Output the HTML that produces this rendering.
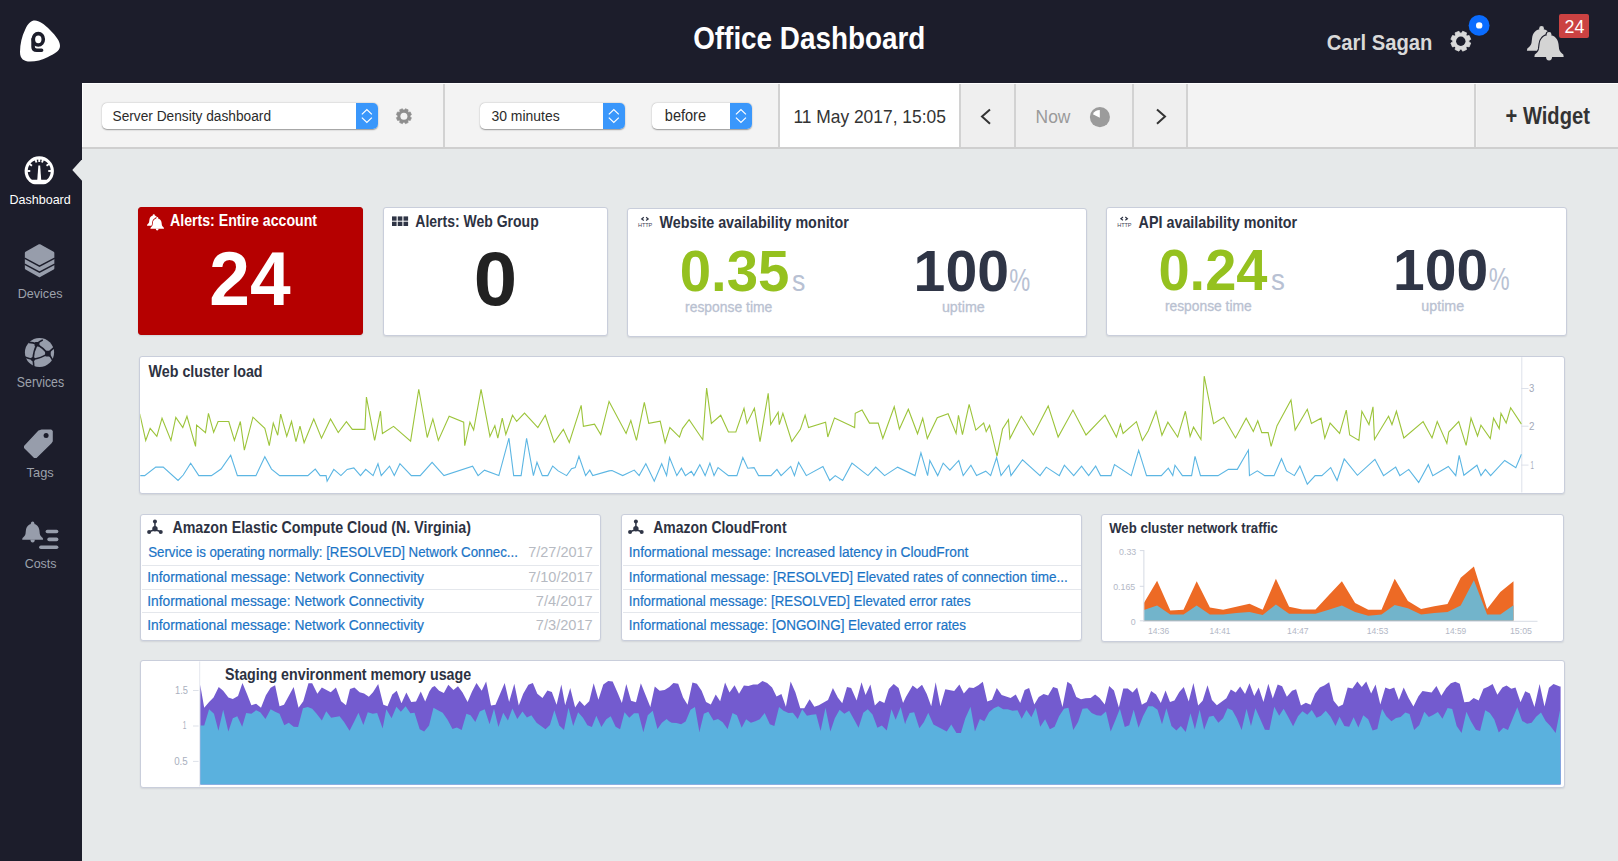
<!DOCTYPE html>
<html><head><meta charset="utf-8"><title>Office Dashboard</title>
<style>
*{box-sizing:border-box;margin:0;padding:0}
html,body{width:1618px;height:861px;overflow:hidden;background:#e6e9ea;font-family:"Liberation Sans",sans-serif}
.r{position:absolute}
.t{position:absolute;white-space:nowrap;transform-origin:0 0}
</style></head><body>
<div class="r" style="left:0;top:0;width:1618px;height:83px;background:#1c1d2b"></div>
<div class="r" style="left:0;top:83px;width:82px;height:778px;background:#1c1d2b"></div>
<div class="r" style="left:82px;top:83px;width:1536px;height:64px;background:#f3f3f3"></div>
<div class="r" style="left:82px;top:147px;width:1536px;height:2px;background:#cfcfcf"></div>
<div class="r" style="left:82px;top:83px;width:1536px;height:1px;background:#fdfdfd"></div>
<div class="r" style="left:82px;top:83px;width:1px;height:64px;background:#fdfdfd"></div>
<div class="r" style="left:779px;top:84px;width:180px;height:63px;background:#ffffff"></div>
<div class="r" style="left:961px;top:84px;width:54px;height:63px;background:#efefef"></div>
<div class="r" style="left:1016px;top:84px;width:116px;height:63px;background:#efefef"></div>
<div class="r" style="left:1134px;top:84px;width:53px;height:63px;background:#efefef"></div>
<div class="r" style="left:1477px;top:84px;width:141px;height:63px;background:#efefef"></div>
<div class="r" style="left:443.1px;top:84px;width:2px;height:63px;background:#d2d2d2"></div>
<div class="r" style="left:777.6px;top:84px;width:2px;height:63px;background:#d2d2d2"></div>
<div class="r" style="left:959.4px;top:84px;width:2px;height:63px;background:#d2d2d2"></div>
<div class="r" style="left:1013.8px;top:84px;width:2px;height:63px;background:#d2d2d2"></div>
<div class="r" style="left:1131.9px;top:84px;width:2px;height:63px;background:#d2d2d2"></div>
<div class="r" style="left:1186.4px;top:84px;width:2px;height:63px;background:#d2d2d2"></div>
<div class="r" style="left:1474.4px;top:84px;width:2px;height:63px;background:#d2d2d2"></div>
<div class="r" style="left:101.5px;top:103.3px;width:276.3px;height:25.5px;background:#fff;border-radius:5px;box-shadow:0 0.6px 1.4px rgba(0,0,0,.38)"></div>
<div class="r" style="left:355.9px;top:103.3px;width:21.900000000000034px;height:25.5px;background:#3a97fb;border-radius:0 5px 5px 0"></div>
<svg class="r" style="left:0;top:0" width="1618" height="150"><polyline points="361.85,114.4 366.85,109.5 371.85,114.4" fill="none" stroke="#fff" stroke-width="1.2"/><polyline points="361.85,117.6 366.85,122.5 371.85,117.6" fill="none" stroke="#fff" stroke-width="1.2"/></svg>
<div class="r" style="left:480.3px;top:103.3px;width:144.40000000000003px;height:25.5px;background:#fff;border-radius:5px;box-shadow:0 0.6px 1.4px rgba(0,0,0,.38)"></div>
<div class="r" style="left:602.9px;top:103.3px;width:21.800000000000068px;height:25.5px;background:#3a97fb;border-radius:0 5px 5px 0"></div>
<svg class="r" style="left:0;top:0" width="1618" height="150"><polyline points="608.8,114.4 613.8,109.5 618.8,114.4" fill="none" stroke="#fff" stroke-width="1.2"/><polyline points="608.8,117.6 613.8,122.5 618.8,117.6" fill="none" stroke="#fff" stroke-width="1.2"/></svg>
<div class="r" style="left:652.4px;top:103.3px;width:99.39999999999998px;height:25.5px;background:#fff;border-radius:5px;box-shadow:0 0.6px 1.4px rgba(0,0,0,.38)"></div>
<div class="r" style="left:730.1px;top:103.3px;width:21.699999999999932px;height:25.5px;background:#3a97fb;border-radius:0 5px 5px 0"></div>
<svg class="r" style="left:0;top:0" width="1618" height="150"><polyline points="735.95,114.4 740.95,109.5 745.95,114.4" fill="none" stroke="#fff" stroke-width="1.2"/><polyline points="735.95,117.6 740.95,122.5 745.95,117.6" fill="none" stroke="#fff" stroke-width="1.2"/></svg>
<svg class="r" style="left:0;top:0" width="500" height="150"><path d="M409.98,115.75 L411.45,114.69 L410.31,111.93 L408.52,112.21 L408.37,112.05 L408.21,111.89 L408.05,111.73 L407.89,111.58 L408.17,109.79 L405.41,108.65 L404.35,110.12 L404.12,110.10 L403.90,110.10 L403.68,110.10 L403.45,110.12 L402.39,108.65 L399.63,109.79 L399.91,111.58 L399.75,111.73 L399.59,111.89 L399.43,112.05 L399.28,112.21 L397.49,111.93 L396.35,114.69 L397.82,115.75 L397.80,115.98 L397.80,116.20 L397.80,116.42 L397.82,116.65 L396.35,117.71 L397.49,120.47 L399.28,120.19 L399.43,120.35 L399.59,120.51 L399.75,120.67 L399.91,120.82 L399.63,122.61 L402.39,123.75 L403.45,122.28 L403.68,122.30 L403.90,122.30 L404.12,122.30 L404.35,122.28 L405.41,123.75 L408.17,122.61 L407.89,120.82 L408.05,120.67 L408.21,120.51 L408.37,120.35 L408.52,120.19 L410.31,120.47 L411.45,117.71 L409.98,116.65 L410.00,116.42 L410.00,116.20 L410.00,115.98Z" fill="#8e8e8e" stroke="#8e8e8e" stroke-width="0.6" stroke-linejoin="round"/><circle cx="403.9" cy="116.2" r="3.5" fill="#f3f3f3"/></svg>
<svg class="r" style="left:0;top:0" width="1618" height="150"><polyline points="990,109.5 982,116.6 990,123.7" fill="none" stroke="#333" stroke-width="2"/><polyline points="1157,109.5 1165,116.6 1157,123.7" fill="none" stroke="#333" stroke-width="2"/><circle cx="1099.9" cy="117.1" r="10.05" fill="#9b9b9b"/><path d="M1099.8,117.7 L1099.8,110.0 A7.7,7.7 0 0 0 1092.9,114.2 Z" fill="#ffffff"/></svg>
<svg class="r" style="left:20px;top:20px" width="41" height="42" viewBox="0 0 41 42"><path d="M5,10 C8,3 11,0.5 15,0.5 C19,0.5 24,4 30,10 C36,16 40,21 40,26 C40,31 34,34 28,37 C22,40 16,41.5 10,41.5 C4,41.5 0,39 0,32 C0,24 2,16 5,10 Z" fill="#fff"/><ellipse cx="18.3" cy="19.3" rx="5.0" ry="5.7" fill="none" stroke="#1c1d2b" stroke-width="3.6"/><path d="M13.1,19 L13.1,27 Q13.1,30.2 16.8,30.2 L21.6,30.2" fill="none" stroke="#1c1d2b" stroke-width="3.6" stroke-linecap="round"/></svg>
<svg class="r" style="left:0;top:0" width="1618" height="83"><path d="M1468.87,40.52 L1470.73,39.34 L1469.13,35.49 L1466.99,35.97 L1466.76,35.72 L1466.53,35.47 L1466.28,35.24 L1466.03,35.01 L1466.51,32.87 L1462.66,31.27 L1461.48,33.13 L1461.14,33.11 L1460.80,33.10 L1460.46,33.11 L1460.12,33.13 L1458.94,31.27 L1455.09,32.87 L1455.57,35.01 L1455.32,35.24 L1455.07,35.47 L1454.84,35.72 L1454.61,35.97 L1452.47,35.49 L1450.87,39.34 L1452.73,40.52 L1452.71,40.86 L1452.70,41.20 L1452.71,41.54 L1452.73,41.88 L1450.87,43.06 L1452.47,46.91 L1454.61,46.43 L1454.84,46.68 L1455.07,46.93 L1455.32,47.16 L1455.57,47.39 L1455.09,49.53 L1458.94,51.13 L1460.12,49.27 L1460.46,49.29 L1460.80,49.30 L1461.14,49.29 L1461.48,49.27 L1462.66,51.13 L1466.51,49.53 L1466.03,47.39 L1466.28,47.16 L1466.53,46.93 L1466.76,46.68 L1466.99,46.43 L1469.13,46.91 L1470.73,43.06 L1468.87,41.88 L1468.89,41.54 L1468.90,41.20 L1468.89,40.86Z" fill="#d9d9d9" stroke="#d9d9d9" stroke-width="0.8" stroke-linejoin="round"/><circle cx="1460.8" cy="41.2" r="4.7" fill="#1c1d2b"/><circle cx="1479.1" cy="25.4" r="10.45" fill="#0a6cff"/><circle cx="1479.2" cy="25.4" r="3.2" fill="#fff"/></svg>
<svg class="r" style="left:0;top:0" width="1618" height="83"><path d="M1541.55,28.98 C1535.90,28.98 1532.70,33.04 1532.10,38.00 L1531.50,42.96 C1531.00,45.54 1528.90,46.93 1527.30,48.52 L1526.90,50.80 L1556.20,50.80 L1555.80,48.52 C1554.20,46.93 1552.10,45.54 1551.60,42.96 L1551.00,38.00 C1550.40,33.04 1547.20,28.98 1541.55,28.98 Z" fill="#d4d4d4"/><ellipse cx="1541.55" cy="28.48" rx="2.40" ry="2.38" fill="#d4d4d4"/><path d="M1538.50,50.40 L1544.60,50.40 A3.05,4.07 0 0 1 1538.50,50.40 Z" fill="#d4d4d4"/><path d="M1549.05,34.90 C1543.40,34.90 1540.20,39.00 1539.60,44.00 L1539.00,49.00 C1538.50,51.60 1536.40,53.00 1534.80,54.60 L1534.40,56.90 L1563.70,56.90 L1563.30,54.60 C1561.70,53.00 1559.60,51.60 1559.10,49.00 L1558.50,44.00 C1557.90,39.00 1554.70,34.90 1549.05,34.90 Z" fill="#1c1d2b" stroke="#1c1d2b" stroke-width="2.2"/><ellipse cx="1549.05" cy="34.40" rx="2.40" ry="2.40" fill="#1c1d2b" stroke="#1c1d2b" stroke-width="2.2"/><path d="M1549.05,34.90 C1543.40,34.90 1540.20,39.00 1539.60,44.00 L1539.00,49.00 C1538.50,51.60 1536.40,53.00 1534.80,54.60 L1534.40,56.90 L1563.70,56.90 L1563.30,54.60 C1561.70,53.00 1559.60,51.60 1559.10,49.00 L1558.50,44.00 C1557.90,39.00 1554.70,34.90 1549.05,34.90 Z" fill="#d4d4d4"/><ellipse cx="1549.05" cy="34.40" rx="2.40" ry="2.40" fill="#d4d4d4"/><path d="M1546.00,56.50 L1552.10,56.50 A3.05,4.10 0 0 1 1546.00,56.50 Z" fill="#d4d4d4"/></svg>
<div class="r" style="left:1559.4px;top:13.7px;width:29.7px;height:24.3px;background:#cb4242;border-radius:2px"></div>
<svg class="r" style="left:0;top:140px" width="82" height="440" viewBox="0 140 82 440"><polygon points="82.5,158.7 72.3,170 82.5,181.3" fill="#e6e9ea"/><clipPath id="gclip"><rect x="20" y="150" width="40" height="34.2"/></clipPath><circle cx="39.25" cy="171.0" r="14.65" fill="#fff" clip-path="url(#gclip)"/><path d="M31.85,179.80 A11.5,11.5 0 1 1 46.65,179.80 Z" fill="#1c1d2b"/><line x1="51.25" y1="171.00" x2="48.25" y2="171.00" stroke="#fff" stroke-width="1.9"/><line x1="48.96" y1="163.95" x2="46.53" y2="165.71" stroke="#fff" stroke-width="1.9"/><line x1="42.96" y1="159.59" x2="42.03" y2="162.44" stroke="#fff" stroke-width="1.9"/><line x1="39.25" y1="159.00" x2="39.25" y2="162.00" stroke="#fff" stroke-width="1.9"/><line x1="35.54" y1="159.59" x2="36.47" y2="162.44" stroke="#fff" stroke-width="1.9"/><line x1="29.54" y1="163.95" x2="31.97" y2="165.71" stroke="#fff" stroke-width="1.9"/><line x1="27.25" y1="171.00" x2="30.25" y2="171.00" stroke="#fff" stroke-width="1.9"/><polygon points="37.25,180.20 41.25,180.20 40.15,165.60 38.35,165.60" fill="#fff"/><polygon points="39.5,245.5 26.2,253.0 26.2,268.3 39.5,275.9 53.0,268.3 53.0,253.0" fill="#979dab" stroke="#979dab" stroke-width="2.7" stroke-linejoin="round"/><polyline points="24.5,258.2 39.5,266.2 54.8,258.2" fill="none" stroke="#1c1d2b" stroke-width="1.5"/><polyline points="24.5,264.1 39.5,272.2 54.8,264.1" fill="none" stroke="#1c1d2b" stroke-width="1.5"/><circle cx="39.5" cy="352.5" r="14.6" fill="#979dab"/><g fill="none" stroke="#1c1d2b" stroke-width="1.6" stroke-linecap="round"><path d="M29,342.4 Q33,342.6 37,344.3"/><path d="M37,344.3 Q39,341.5 42.2,340.2"/><path d="M37,344.3 Q43,348 47.9,353.6"/><path d="M37,344.3 Q33.5,351 33,359.2"/><path d="M47.9,353.6 Q51,350 54.2,347.5"/><path d="M47.9,353.6 Q50.5,356 52.5,359.8"/><path d="M47.9,353.6 Q41,358.3 33,359.2"/><path d="M33,359.2 Q29,358.8 25.2,357.2"/><path d="M33,359.2 Q33.6,362.5 33.8,367.5"/></g><rect x="34.6" y="342" width="4.8" height="4.6" rx="1.2" fill="#1c1d2b"/><rect x="45.1" y="350.8" width="5.6" height="5.6" rx="1.2" fill="#1c1d2b"/><circle cx="33" cy="359.2" r="2.1" fill="#1c1d2b"/><polygon points="24.8,446.2 38.8,431.2 41.8,430.2 51,430.2 52,431.2 52,441 51,442.6 36.2,457.2 34.4,457.2 24.8,447.8" fill="#979dab" stroke="#979dab" stroke-width="1.6" stroke-linejoin="round"/><circle cx="46.1" cy="435.4" r="2.5" fill="#1c1d2b"/><path d="M32.65,523.63 C28.62,523.63 26.34,526.64 25.91,530.32 L25.48,533.99 C25.12,535.90 23.63,536.93 22.49,538.11 L22.20,539.80 L43.10,539.80 L42.81,538.11 C41.67,536.93 40.18,535.90 39.82,533.99 L39.39,530.32 C38.96,526.64 36.68,523.63 32.65,523.63 Z" fill="#979dab"/><ellipse cx="32.65" cy="523.26" rx="1.71" ry="1.76" fill="#979dab"/><path d="M30.47,539.51 L34.83,539.51 A2.18,3.01 0 0 1 30.47,539.51 Z" fill="#979dab"/><line x1="47.4" y1="531.5" x2="56.6" y2="531.5" stroke="#979dab" stroke-width="3.6" stroke-linecap="round"/><line x1="49.1" y1="539.4" x2="56.6" y2="539.4" stroke="#979dab" stroke-width="3.6" stroke-linecap="round"/><line x1="40.9" y1="547.3" x2="56.6" y2="547.3" stroke="#979dab" stroke-width="3.6" stroke-linecap="round"/></svg>
<div class="r" style="left:138px;top:207px;width:225px;height:128px;background:#b50000;border:1px solid #b50000;border-radius:3px;box-shadow:0 1px 1.5px rgba(40,50,80,.10)"></div>
<div class="r" style="left:383px;top:207px;width:225px;height:129px;background:#fff;border:1px solid #c9cedb;border-radius:3px;box-shadow:0 1px 1.5px rgba(40,50,80,.10)"></div>
<div class="r" style="left:627px;top:208px;width:460px;height:129px;background:#fff;border:1px solid #c9cedb;border-radius:3px;box-shadow:0 1px 1.5px rgba(40,50,80,.10)"></div>
<div class="r" style="left:1106px;top:207px;width:461px;height:129px;background:#fff;border:1px solid #c9cedb;border-radius:3px;box-shadow:0 1px 1.5px rgba(40,50,80,.10)"></div>
<div class="r" style="left:139px;top:356px;width:1426px;height:138px;background:#fff;border:1px solid #c9cedb;border-radius:3px;box-shadow:0 1px 1.5px rgba(40,50,80,.10)"></div>
<div class="r" style="left:140px;top:514px;width:461px;height:127px;background:#fff;border:1px solid #c9cedb;border-radius:3px;box-shadow:0 1px 1.5px rgba(40,50,80,.10)"></div>
<div class="r" style="left:621px;top:514px;width:461px;height:127px;background:#fff;border:1px solid #c9cedb;border-radius:3px;box-shadow:0 1px 1.5px rgba(40,50,80,.10)"></div>
<div class="r" style="left:1101px;top:514px;width:463px;height:128px;background:#fff;border:1px solid #c9cedb;border-radius:3px;box-shadow:0 1px 1.5px rgba(40,50,80,.10)"></div>
<div class="r" style="left:140px;top:660px;width:1425px;height:128px;background:#fff;border:1px solid #c9cedb;border-radius:3px;box-shadow:0 1px 1.5px rgba(40,50,80,.10)"></div>
<svg class="r" style="left:0;top:200px" width="1618" height="350" viewBox="0 200 1618 350"><path d="M153.80,215.54 C151.18,215.54 149.69,217.43 149.41,219.74 L149.14,222.05 C148.90,223.25 147.93,223.90 147.19,224.64 L147.00,225.70 L160.60,225.70 L160.41,224.64 C159.67,223.90 158.70,223.25 158.46,222.05 L158.19,219.74 C157.91,217.43 156.42,215.54 153.80,215.54 Z" fill="#fff"/><ellipse cx="153.80" cy="215.31" rx="1.11" ry="1.11" fill="#fff"/><path d="M152.38,225.52 L155.22,225.52 A1.42,1.89 0 0 1 152.38,225.52 Z" fill="#fff"/><path d="M157.20,218.45 C154.58,218.45 153.09,220.36 152.81,222.69 L152.54,225.02 C152.30,226.23 151.33,226.88 150.59,227.63 L150.40,228.70 L164.00,228.70 L163.81,227.63 C163.07,226.88 162.10,226.23 161.86,225.02 L161.59,222.69 C161.31,220.36 159.82,218.45 157.20,218.45 Z" fill="#b50000" stroke="#b50000" stroke-width="1.4"/><ellipse cx="157.20" cy="218.22" rx="1.11" ry="1.12" fill="#b50000" stroke="#b50000" stroke-width="1.4"/><path d="M157.20,218.45 C154.58,218.45 153.09,220.36 152.81,222.69 L152.54,225.02 C152.30,226.23 151.33,226.88 150.59,227.63 L150.40,228.70 L164.00,228.70 L163.81,227.63 C163.07,226.88 162.10,226.23 161.86,225.02 L161.59,222.69 C161.31,220.36 159.82,218.45 157.20,218.45 Z" fill="#fff"/><ellipse cx="157.20" cy="218.22" rx="1.11" ry="1.12" fill="#fff"/><path d="M155.78,228.51 L158.62,228.51 A1.42,1.91 0 0 1 155.78,228.51 Z" fill="#fff"/><rect x="392.00" y="216.40" width="4.6" height="4.3" fill="#2f3546"/><rect x="397.75" y="216.40" width="4.6" height="4.3" fill="#2f3546"/><rect x="403.50" y="216.40" width="4.6" height="4.3" fill="#2f3546"/><rect x="392.00" y="221.70" width="4.6" height="4.3" fill="#2f3546"/><rect x="397.75" y="221.70" width="4.6" height="4.3" fill="#2f3546"/><rect x="403.50" y="221.70" width="4.6" height="4.3" fill="#2f3546"/><polyline points="643.8,217.3 641.6999999999999,218.9 643.8,220.5" fill="none" stroke="#2f3546" stroke-width="1.2"/><polyline points="646.0999999999999,217.3 648.1999999999999,218.9 646.0999999999999,220.5" fill="none" stroke="#2f3546" stroke-width="1.2"/><text x="638.0" y="227.4" font-family="Liberation Sans" font-size="5.6" fill="#3f4555" textLength="14.3" lengthAdjust="spacing">HTTP</text><polyline points="1123.0,217.1 1120.9,218.7 1123.0,220.29999999999998" fill="none" stroke="#2f3546" stroke-width="1.2"/><polyline points="1125.3,217.1 1127.4,218.7 1125.3,220.29999999999998" fill="none" stroke="#2f3546" stroke-width="1.2"/><text x="1117.2" y="227.2" font-family="Liberation Sans" font-size="5.6" fill="#3f4555" textLength="14.3" lengthAdjust="spacing">HTTP</text><g fill="#2f3546" stroke="#2f3546"><circle cx="154.95" cy="521.5" r="2.0" stroke="none"/><circle cx="149.1" cy="532.0999999999999" r="2.0" stroke="none"/><circle cx="160.75" cy="532.0999999999999" r="2.0" stroke="none"/><line x1="154.95" y1="522.3" x2="154.95" y2="528.3" stroke-width="1.5"/><path d="M149.45,531.9 Q151.95,529.9 154.95,530.3 Q157.95,529.9 160.45,531.9" fill="none" stroke-width="1.5"/><circle cx="154.95" cy="528.6999999999999" r="2.7" stroke="none"/></g><g fill="#2f3546" stroke="#2f3546"><circle cx="635.9" cy="521.5" r="2.0" stroke="none"/><circle cx="630.05" cy="532.0999999999999" r="2.0" stroke="none"/><circle cx="641.6999999999999" cy="532.0999999999999" r="2.0" stroke="none"/><line x1="635.9" y1="522.3" x2="635.9" y2="528.3" stroke-width="1.5"/><path d="M630.4,531.9 Q632.9,529.9 635.9,530.3 Q638.9,529.9 641.4,531.9" fill="none" stroke-width="1.5"/><circle cx="635.9" cy="528.6999999999999" r="2.7" stroke="none"/></g></svg>
<div class="r" style="left:141.6px;top:565.1px;width:457.69999999999993px;height:1px;background:#e4e7ec"></div>
<div class="r" style="left:141.6px;top:589.3px;width:457.69999999999993px;height:1px;background:#e4e7ec"></div>
<div class="r" style="left:141.6px;top:612.0px;width:457.69999999999993px;height:1px;background:#e4e7ec"></div>
<div class="r" style="left:622.5px;top:565.1px;width:458.29999999999995px;height:1px;background:#e4e7ec"></div>
<div class="r" style="left:622.5px;top:589.3px;width:458.29999999999995px;height:1px;background:#e4e7ec"></div>
<div class="r" style="left:622.5px;top:612.0px;width:458.29999999999995px;height:1px;background:#e4e7ec"></div>
<svg class="r" style="left:0;top:350px" width="1618" height="150" viewBox="0 350 1618 150"><defs><clipPath id="c1"><rect x="140.3" y="357.2" width="1381.5" height="135"/></clipPath></defs><line x1="1521.8" y1="357.2" x2="1521.8" y2="492.5" stroke="#dde1ea" stroke-width="1"/><line x1="1521" y1="388.5" x2="1528.5" y2="388.5" stroke="#dde1ea" stroke-width="1"/><line x1="1521" y1="426.2" x2="1528.5" y2="426.2" stroke="#dde1ea" stroke-width="1"/><line x1="1521" y1="465.1" x2="1528.5" y2="465.1" stroke="#dde1ea" stroke-width="1"/><g clip-path="url(#c1)"><polyline points="139.78,413.76 145.71,440.45 150.16,428.29 156.84,436.3 162.03,418.21 170.93,440.45 175.82,417.46 182.79,427.55 186.95,416.28 195.55,446.39 196.59,425.18 205.49,432.59 208.45,413.31 213.65,432.3 218.09,421.47 228.77,421.47 234.41,440.45 240.34,421.47 244.35,450.09 252.95,417.17 264.82,428.29 269.27,445.65 273.27,423.1 277.72,435.26 280.69,414.2 286.77,436.3 291.52,421.47 295.96,441.64 299.97,426.07 304.12,442.68 313.76,418.95 321.48,438.23 330.52,418.95 338.24,432.59 346.4,421.62 352.33,429.33 364.94,429.33 366.42,397.14 374.58,440.45 375,438.97 380.49,411.23 382.42,433.48 393.54,426.36 410.6,441.2 418.76,389.28 427.21,437.49 432.85,418.95 438.33,440.45 449.16,416.28 463.7,422.21 464.74,445.65 469.93,422.21 473.64,430.07 481.05,389.28 489.95,436.45 494.85,425.62 497.81,438.23 502.26,418.21 505.82,434.52 512.5,415.24 516.65,421.47 524.51,413.01 537.86,427.55 545.28,415.24 554.18,442.38 563.37,429.33 569.3,442.38 581.17,405.3 583.4,426.36 594.52,424.14 600.75,434.52 609.06,401.44 612,407.08 626.09,433.48 630.84,420.43 636.47,440.45 644.33,402.33 648.78,423.4 660.21,421.17 665.1,442.68 669.85,427.55 679.49,437.04 682.45,428.59 689.13,419.69 702.77,439.71 706.63,388.1 711.38,423.4 720.72,415.24 728.43,432 735.85,432 744.01,408.27 746.97,423.4 754.39,408.27 760.03,441.64 768.19,393.29 770.71,424.58 778.12,412.27 779.31,424.58 782.87,413.31 791.77,441.49 800.37,429.33 805.12,415.24 808.53,427.55 825.59,422.21 827.81,437.04 834.49,417.91 851.99,426.36 854.64,427.55 855.23,413.31 862.05,410.05 869.47,423.1 878.22,423.1 882.82,438.53 894.24,406.78 899.43,429.03 908.33,409.31 917.53,433.78 922.72,418.21 927.32,438.53 937.25,417.76 948.08,413.76 956.09,433.48 958.46,415.24 962.47,434.52 969.14,404.41 975.82,430.07 983.68,423.1 986.2,431.55 989.61,425.18 997.03,456.03 1002.52,429.03 1008.45,419.69 1009.93,438.53 1021.35,416.28 1033.37,434.97 1048.2,405.89 1058.14,437.04 1072.97,410.05 1086.02,434.97 1104.99,415.24 1116.41,437.04 1120.41,424.14 1123.08,433.48 1136.43,421.62 1142.36,440.45 1148.3,430.81 1156.01,411.23 1161.94,435.26 1167.87,422.21 1177.66,437.04 1185.38,411.23 1190.12,436.45 1193.53,427.1 1200.95,439.42 1204.21,376.23 1213.56,423.69 1223.64,417.17 1235.51,437.93 1246.19,418.21 1253.31,431.55 1257.76,420.73 1261.76,432.59 1268.14,432.59 1271.11,446.39 1277.04,425.62 1290.98,399.96 1295.14,430.07 1307.3,409.31 1311.45,423.4 1321.09,418.21 1323,428.59 1324.78,438.23 1330.12,423.1 1339.61,433.48 1346.29,410.05 1349.7,434.97 1358.89,440.45 1361.86,411.23 1368.98,424.58 1372.99,406.78 1374.47,439.42 1388.56,416.28 1391.97,424.58 1396.42,411.23 1403.84,437.93 1423.12,421.62 1432.02,437.93 1437.21,421.62 1446.85,443.42 1448.78,432 1458.72,421.62 1466.13,445.35 1471.03,418.21 1477.55,436 1480.96,425.18 1490.31,438.53 1493.57,418.21 1499.21,428.59 1500.99,413.31 1506.18,423.1 1510.63,407.82 1521.46,424.14" fill="none" stroke="#9cc43a" stroke-width="1.1" stroke-linejoin="miter"/><polyline points="139.78,475.61 144.67,475.61 155.8,467.15 163.22,467.15 178.05,480.5 183.24,475.01 190.65,463.15 198.81,475.61 211.42,475.61 221.06,469.08 230.7,455.29 237.38,475.61 255.92,475.61 264.82,456.77 271.49,469.08 279.65,475.61 307.83,475.61 315.25,469.08 320.14,475.61 326.07,475.61 327.11,481.24 333.79,469.38 340.91,475.61 347.14,469.38 353.81,467.89 360.49,475.61 365.68,469.38 373.09,475.61 375,470.86 377.97,463.74 381.23,475.61 389.54,466.11 394.28,475.61 399.92,463.74 411.34,475.61 420.24,475.61 432.1,462.26 443.97,475.61 472.6,466.11 478.09,475.61 484.46,470.12 498.85,475.61 508.94,438.23 513.68,475.61 521.1,475.61 526.59,438.23 533.41,475.61 536.97,462.26 542.31,475.61 547.8,475.61 552.69,466.11 558.18,470.86 566.63,475.61 571.53,468.64 575.24,467.6 578.95,456.32 585.62,475.61 589.77,470.12 592.74,475.61 609.06,470.86 612,470.56 622.68,475.61 634.25,470.12 639.14,475.61 645.82,463.74 654.27,481.24 661.69,463.74 666.58,475.61 669.55,457.51 676.82,475.61 681.42,468.19 685.42,475.61 691.35,471.31 693.87,475.61 699.81,464.63 705.15,475.61 709.89,463.15 714.05,475.61 718.05,467.6 728.43,475.61 736.89,475.61 742.82,457.51 747.72,468.19 754.09,467.6 758.54,475.61 771,475.61 776.94,469.38 781.09,475.61 790.73,466.41 794.44,475.61 798.59,462.26 806.3,475.61 822.92,466.41 829.74,480.5 835.23,475.61 842.64,480.5 851.97,463.15 867.99,475.61 875.7,467.15 884.6,475.61 897.65,467.15 915,475.61 920.94,452.76 927.61,475.61 929.84,460.48 937.7,475.61 943.19,463.15 949.86,470.12 958.76,460.48 963.21,475.61 970.92,465.22 976.56,475.61 985.75,471.16 990.65,475.61 996.58,457.51 1001.03,475.61 1008.89,465.22 1010.97,475.61 1022.54,459.74 1040.04,475.61 1046.27,467.15 1059.32,475.61 1064.37,465.22 1073.71,475.61 1081.57,466.11 1086,472.05 1088.67,475.61 1095.64,466.11 1100.54,475.61 1110.92,475.61 1114.48,464.63 1131.24,475.61 1138.65,450.39 1146.52,475.61 1161.35,475.61 1168.32,468.19 1172.77,475.61 1174.99,465.22 1182.41,475.61 1191.61,475.61 1195.02,456.32 1200.51,475.61 1218.01,475.61 1228.39,469.38 1237.29,469.38 1248.41,450.09 1249.45,475.61 1257.31,470.86 1264.73,475.61 1274.07,475.61 1281.49,458.7 1286.53,470.86 1294.4,475.61 1299.88,466.11 1307.3,484.21 1315.16,475.61 1321.84,475.61 1323,474.57 1330.71,467.6 1337.09,480.5 1344.21,458.99 1357.41,475.31 1374.91,459.29 1383.52,475.61 1395.68,467.15 1399.83,475.61 1408.73,469.38 1418.67,482.43 1428.31,464.63 1432.76,475.61 1448.33,466.41 1455.75,475.61 1459.16,455.29 1463.91,475.31 1476.96,465.22 1480.96,475.61 1485.41,469.38 1490.61,475.61 1504.7,460.48 1515.82,467.6 1521.46,454.25" fill="none" stroke="#5cb6e3" stroke-width="1.1"/></g></svg>
<svg class="r" style="left:0;top:540px" width="1618" height="100" viewBox="0 540 1618 100"><polygon points="1143.9,620.8 1143.9,603.04 1157.1,580.79 1170.3,610.45 1183.5,609.71 1196.7,581.23 1209.9,607.49 1223.1,609.71 1236.3,606.75 1249.5,603.78 1262.7,609.71 1275.9,578.86 1289.1,606.75 1302.3,609.42 1315.5,609.42 1328.7,595.32 1341.9,581.23 1355.1,603.04 1368.3,609.71 1381.5,609.71 1394.7,578.86 1407.9,601.11 1421.1,608.97 1434.3,606.3 1447.5,604.08 1460.7,577.82 1473.9,566.4 1487.1,608.97 1500.3,591.91 1513.5,581.23 1513.5,620.8" fill="#ed6a25"/><polygon points="1143.9,620.8 1143.9,610.01 1157.1,605.56 1170.3,614.61 1183.5,614.61 1196.7,605.56 1209.9,614.61 1223.1,614.61 1236.3,613.12 1249.5,611.94 1262.7,614.9 1275.9,604.52 1289.1,613.72 1302.3,613.72 1315.5,613.72 1328.7,609.71 1341.9,605.56 1355.1,611.94 1368.3,615.65 1381.5,614.61 1394.7,604.97 1407.9,608.23 1421.1,614.46 1434.3,612.98 1447.5,611.94 1460.7,605.56 1473.9,580.34 1487.1,614.46 1500.3,614.61 1513.5,605.26 1513.5,620.8" fill="#72b4cb"/><line x1="1143.9" y1="550" x2="1143.9" y2="621.3" stroke="#d5dae4" stroke-width="1"/><line x1="1143.4" y1="621.3" x2="1537.5" y2="621.3" stroke="#dfe3ea" stroke-width="1.2"/><line x1="1139.8" y1="550.6" x2="1144" y2="550.6" stroke="#d5dae4" stroke-width="1"/><line x1="1139.8" y1="586.3" x2="1144" y2="586.3" stroke="#d5dae4" stroke-width="1"/><line x1="1139.8" y1="620.8" x2="1144" y2="620.8" stroke="#d5dae4" stroke-width="1"/></svg>
<svg class="r" style="left:0;top:655px" width="1618" height="140" viewBox="0 655 1618 140"><polygon points="200.2,784.4 200.2,684.83 200.2,684.83 204.2,707.82 209.09,701.89 213.54,697.44 218.73,687.06 223.18,690.77 228.37,697.44 232.82,698.92 238.01,695.96 242.46,683.05 246.91,693.73 251.36,705.3 256.11,703.82 261,707.82 265.9,695.22 270.65,687.8 275.09,685.13 279.54,706.34 283.99,704.86 293.64,687.06 298.53,707.82 303.28,701.15 308.47,683.35 312.18,683.35 317.37,693.73 321.82,687.5 330.72,692.25 335.91,687.5 341.1,701.15 345.99,705.3 350,688.99 354.45,687.5 359.64,692.25 364.09,693.44 368.84,696.7 372.99,692.25 378.18,684.09 383.37,704.86 387.52,706.34 392.27,694.47 396.72,690.77 401.47,703.37 406.36,692.55 411.26,701.89 416,701.44 420.75,691.51 425.2,701.44 429.35,691.51 432,687.5 434.67,686.02 439.12,690.77 443.87,692.99 448.32,684.83 453.51,690.02 457.96,686.32 462.41,692.25 467.6,701.89 472.05,691.51 476.5,683.05 481.69,690.77 486.14,681.57 491.03,705.6 495.48,704.86 504.68,683.05 509.13,701.89 514.32,683.65 518.77,705.6 523.22,693.73 528.41,684.83 532.86,683.05 537.31,693.73 542.5,697.88 547.4,690.47 551.85,691.95 556.59,704.86 561.34,684.54 565.19,705.3 570.24,688.1 575.13,707.38 579.58,700.85 584.48,705.89 589.22,701.15 593.67,683.35 598.42,699.66 603.31,684.54 608.21,681.12 612.66,681.57 617.4,692.25 621.85,702.93 626.3,684.09 631.05,700.85 635.95,702.33 640.84,683.35 650.33,707.08 654.78,686.61 659.68,690.77 664.57,690.02 669.32,687.06 673.45,683.05 678.2,683.65 683.09,697.44 687.54,704.86 692.44,682.61 696.88,683.65 701.63,690.77 706.08,701.89 710.83,704.41 715.72,694.47 720.17,701.15 725.07,682.61 729.52,692.55 734.56,685.13 739.01,693.73 743.9,685.57 748.35,686.02 753.25,684.54 757.7,684.54 762.44,681.12 767.19,683.05 772.09,687.5 776.53,696.4 781.43,694.03 785.88,706.78 790.63,681.57 795.37,692.25 800.27,708.27 804.27,708.27 809.61,699.37 814.36,706.78 818.81,705.3 828,699.96 832.9,688.1 837.79,697.44 842.24,703.37 846.99,687.06 851.14,688.1 856.63,700.41 861.52,682.16 865.53,694.92 870.42,684.54 874.87,705.6 879.62,700.85 884.37,702.93 888.82,688.99 893.71,684.09 898.61,688.1 903.06,702.93 906,696.7 912.67,685.57 917.12,688.99 922.02,684.83 926.77,694.03 931.22,706.34 935.66,682.16 940.41,706.34 945.31,689.28 954.21,691.06 959.4,684.54 963.85,693.44 969.04,687.5 973.49,688.1 978.38,685.13 982.83,681.87 987.28,701.44 992.03,699.66 996.77,688.1 1001.67,694.92 1010.57,697.88 1015.76,694.47 1020.21,702.93 1024.66,690.02 1029.11,688.1 1034.3,704.41 1038.75,696.99 1043.64,694.03 1048.09,695.51 1053.14,687.06 1057.59,688.54 1062.48,707.08 1067.38,681.87 1071.38,684.54 1076.28,696.99 1081.02,699.37 1085.47,698.18 1090.66,697.88 1095.11,694.47 1099.56,697.88 1104.75,704.41 1109.2,686.02 1113.95,690.47 1118.84,707.38 1123.29,688.54 1127.74,688.54 1132.64,692.55 1137.09,687.5 1141.84,704.86 1143,704.11 1146.71,701.89 1151.16,691.06 1156.05,694.47 1160.8,702.93 1165.55,690.47 1169.99,701.89 1174.44,700.41 1179.34,691.95 1183.79,687.06 1188.68,701.44 1193.43,683.05 1198.18,705.6 1202.63,700.85 1207.52,685.13 1211.97,699.96 1216.87,705.3 1226.36,698.18 1230.81,689.58 1235.7,692.55 1240.15,686.61 1245.05,694.03 1249.5,683.35 1254.24,695.96 1258.69,687.5 1263.44,701.89 1268.33,683.65 1272.78,698.48 1277.68,684.54 1282.13,686.32 1286.87,696.7 1292.07,690.77 1296.07,689.28 1300.96,705.6 1305.86,702.63 1310.61,704.86 1315.06,693.73 1319.8,687.5 1324.25,685.57 1329.15,682.16 1333.6,700.85 1338.49,706.78 1342.94,704.41 1347.69,687.5 1352.43,688.54 1357.33,681.57 1361.78,687.06 1366.23,681.57 1371.12,693.44 1375.57,684.54 1380.32,704.41 1385.3,687.42 1389.76,689.24 1394.22,687.42 1398.82,699.97 1403.7,687.42 1408.58,697.88 1413.45,706.52 1418.33,696.48 1422.51,690.91 1431.58,692.58 1436.45,686.03 1441.33,695.79 1446.21,688.12 1450.81,683.24 1455.27,681.85 1459.73,683.66 1464.33,702.34 1469.21,701.78 1473.67,697.88 1478.69,700.39 1483.43,688.82 1488.03,686.73 1492.63,683.94 1497.37,694.81 1502.39,687.42 1506.57,685.61 1511.31,688.82 1515.49,687.42 1520.51,702.34 1525.25,691.19 1529.85,693.42 1534.45,706.94 1539.6,683.94 1544.48,706.52 1548.94,687.84 1553.54,683.94 1559.82,686.45 1560.6,686.45 1560.6,784.4" fill="#735bcf"/><polygon points="200.2,784.4 200.2,725.62 200.2,725.62 204.2,725.62 209.09,709.31 213.99,713.76 218.44,730.81 223.18,709.75 228.37,731.55 232.82,718.21 237.27,716.28 242.17,726.66 246.17,713.01 251.36,713.76 256.11,710.34 260.26,712.27 265.45,718.95 270.65,709.31 275.09,711.83 279.54,713.76 284.29,725.18 288.74,722.65 293.64,726.66 298.09,727.1 302.98,708.27 307.73,707.08 312.18,708.86 316.63,713.76 321.82,720.43 326.27,711.23 331.16,717.76 339.62,716.28 344.07,721.91 349.55,730.81 354,721.91 358.45,712.72 363.35,724.88 367.8,712.27 372.69,713.76 377.14,713.01 382.63,728.59 386.34,709.31 391.53,718.21 396.42,706.78 400.87,711.83 405.62,706.34 410.37,713.31 414.52,712.72 419.71,729.33 424.16,731.55 429.06,725.62 433.48,707.82 437.93,710.34 442.68,712.72 447.57,719.69 452.47,729.03 456.92,727.55 461.66,730.07 466.41,713.76 470.56,715.24 475.31,721.91 479.76,711.53 484.65,709.31 489.55,724.14 494,708.86 498.45,727.1 503.2,712.72 507.94,720.43 512.39,708.56 517.29,718.95 522.48,711.53 526.93,717.46 531.38,715.24 536.57,722.65 545.47,729.33 549.92,724.88 554.37,710.34 559.26,725.62 564.01,730.07 568.46,707.82 573.2,726.07 578.1,712.27 582.99,717.76 587.44,725.18 591.89,727.1 596.34,715.68 601.39,727.1 606.28,719.24 610.73,716.28 615.63,726.66 620.07,729.33 624.52,712.27 629.27,717.76 634.02,713.31 638.47,713.31 643.36,732.3 647.81,715.24 652.71,710.79 657.45,729.03 661.9,722.65 666.65,718.95 669,721.17 671.67,722.65 676.42,723.1 681.16,724.14 685.61,721.62 690.51,709.75 694.96,707.08 699.41,732 703.86,713.76 708.31,711.83 713.5,720.43 717.95,718.95 722.69,722.21 727.59,729.03 732.48,713.01 736.93,715.24 741.68,727.85 746.13,719.24 750.87,722.65 755.32,721.17 759.77,719.24 764.67,713.01 769.86,724.14 774.31,726.07 779.06,707.08 783.51,710.79 788.4,713.01 792.85,712.72 797.75,718.95 802.19,709.31 806.94,715.68 811.69,714.79 816.14,714.2 820.59,731.11 825.48,707.82 830.38,731.55 834.83,718.21 839.57,709.75 844.32,713.76 849.21,710.79 853.66,718.65 858.56,727.85 863.3,712.72 867.75,709.31 872.5,714.5 877.4,727.85 881.84,725.62 886.74,730.52 891.49,709.31 895.64,719.69 900.68,707.08 905.13,724.14 906,721.17 909.71,713.01 914.16,712.27 919.35,728.14 923.8,722.21 928.25,712.72 933.44,724.58 946.79,731.55 951.24,724.58 956.43,733.04 960.88,733.04 965.33,718.21 970.52,706.78 974.97,731.55 979.87,718.95 984.32,721.17 989.06,712.27 993.81,708.27 998.26,706.34 1003.15,709.31 1007.6,709.31 1012.5,710.79 1017.54,710.34 1021.69,718.65 1026.44,710.05 1031.33,717.17 1035.78,707.82 1040.23,726.66 1045.13,719.24 1049.87,729.33 1054.62,726.66 1059.07,716.28 1063.96,708.86 1068.41,707.82 1073.31,730.07 1078.06,721.91 1082.51,708.86 1087.25,708.27 1091.7,713.01 1096.6,715.24 1101.05,715.68 1105.94,711.53 1110.69,731.55 1115.14,720.73 1119.88,708.86 1124.78,727.1 1129.23,725.18 1133.68,709.75 1138.57,727.85 1143,716.28 1148.19,706.34 1152.64,706.34 1157.54,709.75 1161.99,724.14 1166.44,708.27 1171.48,726.07 1176.37,730.52 1180.82,726.07 1185.72,732 1190.46,713.31 1194.91,729.33 1199.66,709.75 1204.11,729.63 1209,716.72 1213.45,715.68 1218.35,722.65 1223.09,718.21 1227.54,708.27 1232.29,710.34 1236.74,718.21 1241.64,730.07 1246.53,708.86 1250.98,726.07 1255.43,708.27 1260.18,718.95 1264.92,729.63 1269.37,730.07 1274.27,706.78 1279.16,715.68 1283.61,708.86 1288.36,717.17 1293.1,726.36 1298,716.28 1302.45,711.23 1307.34,714.79 1311.79,710.05 1316.54,717.76 1320.99,715.68 1325.74,710.79 1330.63,716.72 1335.52,726.07 1339.53,716.72 1344.42,726.07 1349.17,726.66 1353.62,717.17 1358.37,727.55 1363.26,715.24 1368.16,719.24 1372.61,730.52 1377.35,729.03 1380,716.7 1382.09,709.03 1386.27,716.28 1391.43,721.3 1396.03,718.09 1400.63,717.11 1405.37,712.51 1409.55,713.91 1414.15,729.94 1419.31,725.06 1424.33,711.82 1428.79,717.11 1432.97,714.88 1437.85,712.1 1442.45,718.79 1447.61,707.91 1452.21,709.03 1456.67,726.04 1461.54,733.01 1466.42,711.82 1470.88,721.3 1475.9,729.66 1480.08,731.05 1485.24,710.14 1489.84,712.93 1494.3,719.48 1498.76,732.45 1503.36,727.85 1507.96,729.94 1517.3,707.36 1522.18,720.88 1527.06,723.67 1531.66,722.69 1536.12,716.7 1541,712.51 1545.6,720.88 1550.34,726.04 1555.63,733.01 1560.09,709.73 1560.6,784.4" fill="#5ab1de"/><line x1="199.7" y1="661.4" x2="199.7" y2="786.5" stroke="#e4e7ee" stroke-width="1"/><line x1="193" y1="690.5" x2="198.6" y2="690.5" stroke="#dde1e9" stroke-width="1"/><line x1="193" y1="726.0" x2="198.6" y2="726.0" stroke="#dde1e9" stroke-width="1"/><line x1="193" y1="761.4" x2="198.6" y2="761.4" stroke="#dde1e9" stroke-width="1"/></svg>
<svg class="r" style="left:0;top:0" width="1618" height="861" font-family="Liberation Sans, sans-serif"><text x="693.20" y="49.20" font-size="30.87" font-weight="bold" fill="#ffffff" textLength="232.07" lengthAdjust="spacingAndGlyphs">Office Dashboard</text>
<text x="1326.70" y="49.50" font-size="22.90" font-weight="bold" fill="#d9d9d9" textLength="105.66" lengthAdjust="spacingAndGlyphs">Carl Sagan</text>
<text x="1564.50" y="32.80" font-size="18.84" font-weight="normal" fill="#ffffff" textLength="19.85" lengthAdjust="spacingAndGlyphs">24</text>
<text x="9.55" y="204.00" font-size="13.19" font-weight="normal" fill="#ffffff" textLength="61.16" lengthAdjust="spacingAndGlyphs">Dashboard</text>
<text x="17.71" y="298.00" font-size="12.75" font-weight="normal" fill="#9da2ac" textLength="44.76" lengthAdjust="spacingAndGlyphs">Devices</text>
<text x="16.80" y="386.80" font-size="14.20" font-weight="normal" fill="#9da2ac" textLength="47.38" lengthAdjust="spacingAndGlyphs">Services</text>
<text x="26.60" y="477.00" font-size="12.75" font-weight="normal" fill="#9da2ac" textLength="27.08" lengthAdjust="spacingAndGlyphs">Tags</text>
<text x="24.70" y="567.80" font-size="12.75" font-weight="normal" fill="#9da2ac" textLength="31.87" lengthAdjust="spacingAndGlyphs">Costs</text>
<text x="112.50" y="121.30" font-size="15.22" font-weight="normal" fill="#2b2b2b" textLength="158.51" lengthAdjust="spacingAndGlyphs">Server Density dashboard</text>
<text x="491.40" y="121.30" font-size="15.22" font-weight="normal" fill="#2b2b2b" textLength="68.23" lengthAdjust="spacingAndGlyphs">30 minutes</text>
<text x="664.87" y="121.30" font-size="15.65" font-weight="normal" fill="#2b2b2b" textLength="41.18" lengthAdjust="spacingAndGlyphs">before</text>
<text x="793.38" y="122.80" font-size="18.84" font-weight="normal" fill="#333333" textLength="152.46" lengthAdjust="spacingAndGlyphs">11 May 2017, 15:05</text>
<text x="1035.57" y="122.50" font-size="18.84" font-weight="normal" fill="#9a9a9a" textLength="34.85" lengthAdjust="spacingAndGlyphs">Now</text>
<text x="1505.60" y="123.50" font-size="23.62" font-weight="bold" fill="#333333" textLength="84.28" lengthAdjust="spacingAndGlyphs">+ Widget</text>
<text x="170.00" y="226.00" font-size="15.65" font-weight="bold" fill="#ffffff" textLength="147.08" lengthAdjust="spacingAndGlyphs">Alerts: Entire account</text>
<text x="209.29" y="304.60" font-size="76.38" font-weight="bold" fill="#ffffff" textLength="81.30" lengthAdjust="spacingAndGlyphs">24</text>
<text x="415.30" y="226.80" font-size="16.23" font-weight="bold" fill="#2d3242" textLength="123.42" lengthAdjust="spacingAndGlyphs">Alerts: Web Group</text>
<text x="473.74" y="304.60" font-size="76.38" font-weight="bold" fill="#222222" textLength="43.39" lengthAdjust="spacingAndGlyphs">0</text>
<text x="659.50" y="228.20" font-size="17.10" font-weight="bold" fill="#2d3242" textLength="189.21" lengthAdjust="spacingAndGlyphs">Website availability monitor</text>
<text x="679.63" y="290.60" font-size="57.39" font-weight="bold" fill="#95c11f" textLength="109.76" lengthAdjust="spacingAndGlyphs">0.35</text>
<text x="791.90" y="290.60" font-size="30.19" font-weight="normal" fill="#b8c1d3" textLength="13.36" lengthAdjust="spacingAndGlyphs">s</text>
<text x="685.10" y="311.60" font-size="14.15" font-weight="normal" fill="#b9c1d1" stroke="#b9c1d1" stroke-width="0.3" textLength="87.17" lengthAdjust="spacingAndGlyphs">response time</text>
<text x="913.61" y="290.60" font-size="57.39" font-weight="bold" fill="#2f3546" textLength="95.39" lengthAdjust="spacingAndGlyphs">100</text>
<text x="1009.26" y="290.60" font-size="31.88" font-weight="normal" fill="#b8c1d3" textLength="20.99" lengthAdjust="spacingAndGlyphs">%</text>
<text x="941.90" y="311.60" font-size="14.15" font-weight="normal" fill="#b9c1d1" stroke="#b9c1d1" stroke-width="0.3" textLength="42.86" lengthAdjust="spacingAndGlyphs">uptime</text>
<text x="1138.60" y="228.00" font-size="17.10" font-weight="bold" fill="#2d3242" textLength="158.41" lengthAdjust="spacingAndGlyphs">API availability monitor</text>
<text x="1158.45" y="290.00" font-size="57.39" font-weight="bold" fill="#95c11f" textLength="109.06" lengthAdjust="spacingAndGlyphs">0.24</text>
<text x="1271.00" y="290.00" font-size="30.19" font-weight="normal" fill="#b8c1d3" textLength="13.90" lengthAdjust="spacingAndGlyphs">s</text>
<text x="1164.90" y="311.00" font-size="14.15" font-weight="normal" fill="#b9c1d1" stroke="#b9c1d1" stroke-width="0.3" textLength="86.87" lengthAdjust="spacingAndGlyphs">response time</text>
<text x="1393.02" y="290.00" font-size="57.39" font-weight="bold" fill="#2f3546" textLength="95.08" lengthAdjust="spacingAndGlyphs">100</text>
<text x="1488.76" y="290.00" font-size="31.88" font-weight="normal" fill="#b8c1d3" textLength="20.89" lengthAdjust="spacingAndGlyphs">%</text>
<text x="1421.30" y="311.00" font-size="14.15" font-weight="normal" fill="#b9c1d1" stroke="#b9c1d1" stroke-width="0.3" textLength="42.86" lengthAdjust="spacingAndGlyphs">uptime</text>
<text x="148.50" y="377.20" font-size="16.96" font-weight="bold" fill="#2d3242" textLength="114.09" lengthAdjust="spacingAndGlyphs">Web cluster load</text>
<text x="172.40" y="533.20" font-size="15.80" font-weight="bold" fill="#2d3242" textLength="298.53" lengthAdjust="spacingAndGlyphs">Amazon Elastic Compute Cloud (N. Virginia)</text>
<text x="653.30" y="533.20" font-size="15.80" font-weight="bold" fill="#2d3242" textLength="133.24" lengthAdjust="spacingAndGlyphs">Amazon CloudFront</text>
<text x="1109.20" y="533.20" font-size="14.20" font-weight="bold" fill="#2d3242" textLength="168.70" lengthAdjust="spacingAndGlyphs">Web cluster network traffic</text>
<text x="224.90" y="680.00" font-size="16.67" font-weight="bold" fill="#2d3242" textLength="246.23" lengthAdjust="spacingAndGlyphs">Staging environment memory usage</text>
<text x="148.20" y="557.20" font-size="14.49" font-weight="normal" fill="#1a74c6" stroke="#1a74c6" stroke-width="0.2" textLength="369.74" lengthAdjust="spacingAndGlyphs">Service is operating normally: [RESOLVED] Network Connec...</text>
<text x="628.75" y="557.20" font-size="14.49" font-weight="normal" fill="#1a74c6" stroke="#1a74c6" stroke-width="0.2" textLength="339.57" lengthAdjust="spacingAndGlyphs">Informational message: Increased latency in CloudFront</text>
<text x="147.25" y="582.00" font-size="14.49" font-weight="normal" fill="#1a74c6" stroke="#1a74c6" stroke-width="0.2" textLength="276.73" lengthAdjust="spacingAndGlyphs">Informational message: Network Connectivity</text>
<text x="628.77" y="582.00" font-size="14.49" font-weight="normal" fill="#1a74c6" stroke="#1a74c6" stroke-width="0.2" textLength="438.89" lengthAdjust="spacingAndGlyphs">Informational message: [RESOLVED] Elevated rates of connection time...</text>
<text x="147.25" y="606.20" font-size="14.49" font-weight="normal" fill="#1a74c6" stroke="#1a74c6" stroke-width="0.2" textLength="276.73" lengthAdjust="spacingAndGlyphs">Informational message: Network Connectivity</text>
<text x="628.78" y="606.20" font-size="14.49" font-weight="normal" fill="#1a74c6" stroke="#1a74c6" stroke-width="0.2" textLength="341.84" lengthAdjust="spacingAndGlyphs">Informational message: [RESOLVED] Elevated error rates</text>
<text x="147.25" y="630.40" font-size="14.49" font-weight="normal" fill="#1a74c6" stroke="#1a74c6" stroke-width="0.2" textLength="276.73" lengthAdjust="spacingAndGlyphs">Informational message: Network Connectivity</text>
<text x="628.77" y="630.40" font-size="14.49" font-weight="normal" fill="#1a74c6" stroke="#1a74c6" stroke-width="0.2" textLength="337.25" lengthAdjust="spacingAndGlyphs">Informational message: [ONGOING] Elevated error rates</text>
<text x="528.20" y="557.20" font-size="14.49" font-weight="normal" fill="#b6bac2" textLength="64.56" lengthAdjust="spacingAndGlyphs">7/27/2017</text>
<text x="528.20" y="582.00" font-size="14.49" font-weight="normal" fill="#b6bac2" textLength="64.56" lengthAdjust="spacingAndGlyphs">7/10/2017</text>
<text x="535.80" y="606.20" font-size="14.49" font-weight="normal" fill="#b6bac2" textLength="56.96" lengthAdjust="spacingAndGlyphs">7/4/2017</text>
<text x="535.80" y="630.40" font-size="14.49" font-weight="normal" fill="#b6bac2" textLength="56.96" lengthAdjust="spacingAndGlyphs">7/3/2017</text>
<text x="1529.10" y="392.30" font-size="11.01" font-weight="normal" fill="#a3a9b9" textLength="5.30" lengthAdjust="spacingAndGlyphs">3</text>
<text x="1529.00" y="430.00" font-size="11.16" font-weight="normal" fill="#a3a9b9" textLength="5.47" lengthAdjust="spacingAndGlyphs">2</text>
<text x="1530.40" y="469.00" font-size="11.16" font-weight="normal" fill="#a3a9b9" textLength="3.41" lengthAdjust="spacingAndGlyphs">1</text>
<text x="1119.10" y="554.60" font-size="9.28" font-weight="normal" fill="#b3b8c6" textLength="17.15" lengthAdjust="spacingAndGlyphs">0.33</text>
<text x="1113.20" y="590.30" font-size="9.28" font-weight="normal" fill="#b3b8c6" textLength="22.04" lengthAdjust="spacingAndGlyphs">0.165</text>
<text x="1130.65" y="624.70" font-size="9.28" font-weight="normal" fill="#b3b8c6" textLength="4.90" lengthAdjust="spacingAndGlyphs">0</text>
<text x="1148.00" y="634.20" font-size="9.28" font-weight="normal" fill="#b3b8c6" textLength="21.24" lengthAdjust="spacingAndGlyphs">14:36</text>
<text x="1209.60" y="634.20" font-size="9.28" font-weight="normal" fill="#b3b8c6" textLength="20.84" lengthAdjust="spacingAndGlyphs">14:41</text>
<text x="1287.10" y="634.20" font-size="9.28" font-weight="normal" fill="#b3b8c6" textLength="21.54" lengthAdjust="spacingAndGlyphs">14:47</text>
<text x="1366.70" y="634.20" font-size="9.28" font-weight="normal" fill="#b3b8c6" textLength="21.64" lengthAdjust="spacingAndGlyphs">14:53</text>
<text x="1445.30" y="634.20" font-size="9.28" font-weight="normal" fill="#b3b8c6" textLength="20.94" lengthAdjust="spacingAndGlyphs">14:59</text>
<text x="1509.90" y="634.20" font-size="9.28" font-weight="normal" fill="#b3b8c6" textLength="22.05" lengthAdjust="spacingAndGlyphs">15:05</text>
<text x="175.00" y="694.20" font-size="10.58" font-weight="normal" fill="#a9afbe" textLength="12.89" lengthAdjust="spacingAndGlyphs">1.5</text>
<text x="182.80" y="728.70" font-size="10.43" font-weight="normal" fill="#a9afbe" textLength="3.67" lengthAdjust="spacingAndGlyphs">1</text>
<text x="174.20" y="765.00" font-size="10.72" font-weight="normal" fill="#a9afbe" textLength="13.56" lengthAdjust="spacingAndGlyphs">0.5</text></svg>
</body></html>
